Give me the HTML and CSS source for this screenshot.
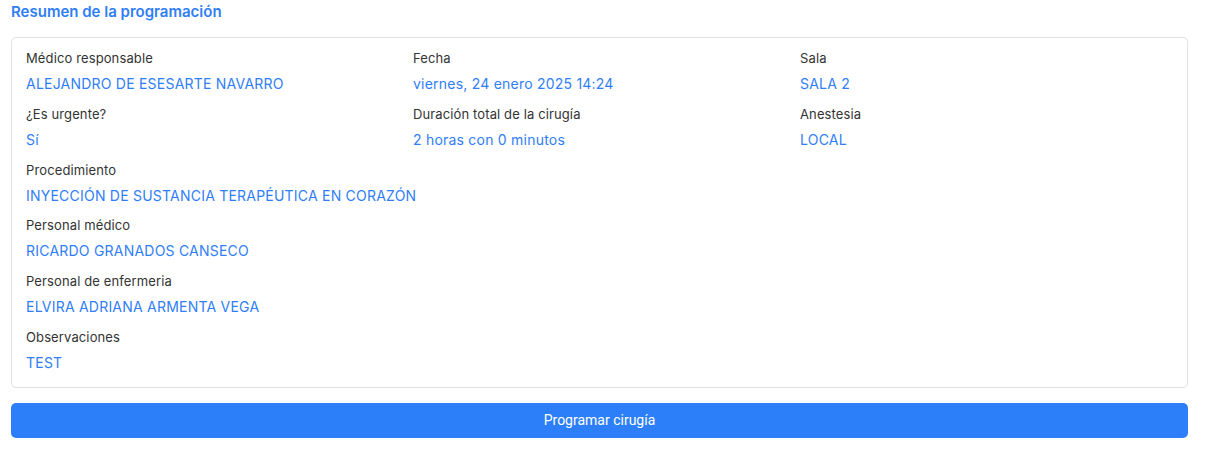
FILE: index.html
```html
<!DOCTYPE html>
<html lang="es">
<head>
<meta charset="utf-8">
<link rel="stylesheet" href="styles.css">
</head>
<body>
<div class="page">
  <h2 class="title">Resumen de la programación</h2>
  <div class="card">
    <div class="grid">
      <div class="field"><div class="label">Médico responsable</div><div class="value">ALEJANDRO DE ESESARTE NAVARRO</div></div>
      <div class="field"><div class="label">Fecha</div><div class="value">viernes, 24 enero 2025 14:24</div></div>
      <div class="field"><div class="label">Sala</div><div class="value">SALA 2</div></div>
      <div class="field"><div class="label">¿Es urgente?</div><div class="value">Sí</div></div>
      <div class="field"><div class="label">Duración total de la cirugía</div><div class="value">2 horas con 0 minutos</div></div>
      <div class="field"><div class="label">Anestesia</div><div class="value">LOCAL</div></div>
      <div class="field full"><div class="label">Procedimiento</div><div class="value">INYECCIÓN DE SUSTANCIA TERAPÉUTICA EN CORAZÓN</div></div>
      <div class="field full"><div class="label">Personal médico</div><div class="value">RICARDO GRANADOS CANSECO</div></div>
      <div class="field full"><div class="label">Personal de enfermeria</div><div class="value">ELVIRA ADRIANA ARMENTA VEGA</div></div>
      <div class="field full"><div class="label">Observaciones</div><div class="value">TEST</div></div>
    </div>
  </div>
  <button class="btn" type="button">Programar cirugía</button>
</div>
</body>
</html>
```
FILE: styles.css
```css
* { box-sizing: border-box; }
html, body { margin: 0; padding: 0; background: #ffffff; }
body { font-family: Inter, "Noto Sans", sans-serif; color: #333; }
.page { padding: 2px 18px 0 11px; }
.title {
  margin: 0;
  font-size: 15px;
  font-weight: 600;
  color: #2f7ef8;
  line-height: 20px;
}
.card {
  margin-top: 15px;
  border: 1px solid #e1e1e1;
  border-radius: 5px;
  padding: 8px 14px 6px 14px;
}
.grid {
  display: grid;
  grid-template-columns: 387px 387px 1fr;
}
.field { height: 55.8px; padding-top: 4px; }
.field.full { grid-column: 1 / -1; }
.label {
  font-size: 13px;
  line-height: 16px;
  letter-spacing: 0.12px;
  color: #333333;
}
.value {
  margin-top: 9px;
  font-size: 14px;
  line-height: 18px;
  letter-spacing: 0.22px;
  color: #2f7ef8;
}
.btn {
  display: block;
  width: 100%;
  margin-top: 15px;
  height: 35px;
  border: none;
  border-radius: 5px;
  background: #2d7ff9;
  color: #ffffff;
  font-family: Roboto, sans-serif;
  font-size: 14px;
}
```
